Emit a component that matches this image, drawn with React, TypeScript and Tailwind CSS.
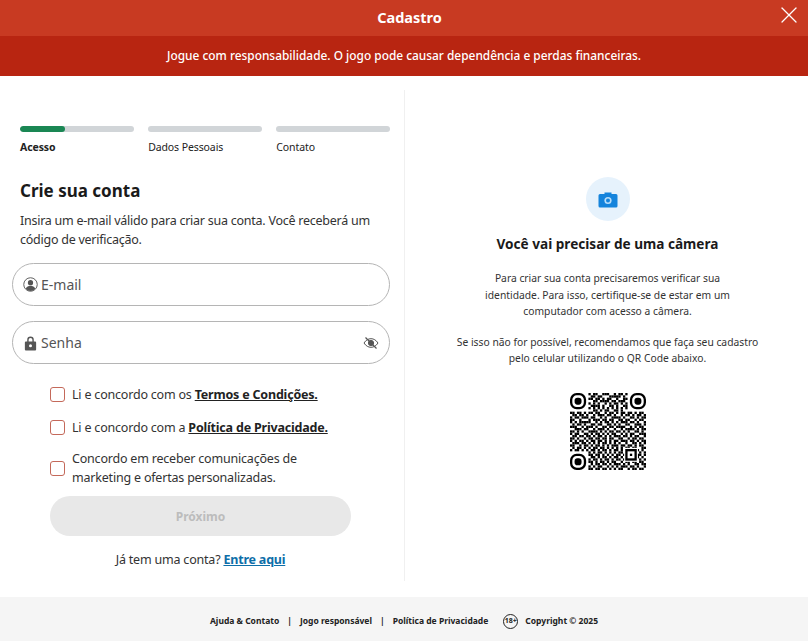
import React from "react";
import { X } from "lucide-react";

const qrRows = [
  "000000001011001110010110100000000",
  "000000000110110001111101000000000",
  "000000001101101011001001100000000",
  "000000000011011110110111000000000",
  "000000001010100101011010100000000",
  "000000000111101001101001100000000",
  "000000001010101010101010100000000",
  "000000000011010110011010000000000",
  "110110101101100101101011011010110",
  "011011010010111011010010110101101",
  "101101110110010100111101001101011",
  "110010001011101101100110110010110",
  "101011111001010110101011101101001",
  "010110100110110011010100110011101",
  "111001011101001101101111001010110",
  "001110110010111010010010111101011",
  "110101001111010101101101010011010",
  "101100110101101010110010101100111",
  "011011011010110101011101101011001",
  "110100101101101101100110010110110",
  "101011010110110101011011101101011",
  "011101101010101101010100100110101",
  "110010110101101010111011011010110",
  "010110101011011010101010110110011",
  "101101010110101101011010101011010",
  "000000001010110101010110100110101",
  "000000001101101010101101010101101",
  "000000000110101101011010101011010",
  "000000001011010110101101011100101",
  "000000001101011010110010110110110",
  "000000000101101101011101010011011",
  "000000001010110010101011101101001",
  "000000001101101101010110010110110",
];

const Finder = ({ x, y }: { x: number; y: number }) => (
  <g>
    <rect x={x + 0.5} y={y + 0.5} width="6" height="6" rx="2.4" fill="none" stroke="#000" strokeWidth="1" />
    <rect x={x + 2} y={y + 2} width="3" height="3" rx="1.2" fill="#000" />
  </g>
);

const QrCode = () => (
  <svg width="76" height="77" viewBox="0 0 33 33" preserveAspectRatio="none">
    {qrRows.map((row, y) =>
      row.split("").map((c, x) => (c === "1" ? <rect key={`${x}-${y}`} x={x} y={y} width="1" height="1" fill="#000" /> : null))
    )}
    <Finder x={0} y={0} />
    <Finder x={26} y={0} />
    <Finder x={0} y={26} />
    <rect x="23.500" y="23.500" width="6" height="6" fill="#fff" />
    <rect x="24.500" y="24.500" width="4" height="4" fill="none" stroke="#000" strokeWidth="1" />
    <rect x="26" y="26" width="1" height="1" fill="#000" />
  </svg>
);

const Step = ({ label, active, progress }: { label: string; active?: boolean; progress?: boolean }) => (
  <div>
    <div className="h-[6px] rounded-full bg-[#d1d5d8] overflow-hidden">
      {progress && <div className="h-full w-[40%] rounded-full bg-[#1a8754]" />}
    </div>
    <p className={`mt-[8px] text-[10.5px] tracking-[-0.1px] leading-[14px] text-[#222] ${active ? "font-bold" : ""}`}>{label}</p>
  </div>
);

const Check = ({ children }: { children: React.ReactNode }) => (
  <label className="flex items-center gap-[7px] text-[12.5px] tracking-[-0.2px] leading-[19px] text-[#333]">
    <span className="w-[15px] h-[15px] shrink-0 rounded-[3px] border border-[#c4695a] bg-white" />
    <span>{children}</span>
  </label>
);

const App: React.FC = () => {
  return (
    <div className="w-full h-[641px] flex flex-col bg-white overflow-hidden font-['Noto_Sans',sans-serif]">
      <header className="relative h-9 shrink-0 flex items-center justify-center pl-[11px] bg-[#c83a22]">
        <h1 className="text-[14.5px] font-bold text-white">Cadastro</h1>
        <X className="absolute right-[5px] top-[1px] text-white" size={28} strokeWidth={1.1} />
      </header>
      <div className="h-10 shrink-0 flex items-center justify-center bg-[#b82511] text-[11.9px] font-medium text-white">
        Jogue com responsabilidade. O jogo pode causar dependência e perdas financeiras.
      </div>

      <main className="flex-1 flex pt-[14px] pb-[16px]">
        <section className="w-[405px] shrink-0 border-r border-[#f0f0f0] pl-3 pr-[14px] pt-9">
          <div className="pl-2 grid grid-cols-3 gap-[14.5px]">
            <Step label="Acesso" active progress />
            <Step label="Dados Pessoais" />
            <Step label="Contato" />
          </div>

          <div className="pl-2 mt-[25px]">
            <h2 className="text-[17px] leading-[24px] font-bold text-[#1a1a1a]">Crie sua conta</h2>
            <p className="mt-[8px] text-[12.5px] tracking-[-0.25px] leading-[19px] text-[#333]">
              Insira um e-mail válido para criar sua conta. Você receberá um código de verificação.
            </p>
          </div>

          <div className="mt-[14px] h-[43px] rounded-full border border-[#b5b5b5] flex items-center pl-[10px] gap-[3px] text-[14px] text-[#555]">
            <svg width="15" height="15" viewBox="0 0 16 16" fill="none">
              <circle cx="8" cy="8" r="7.2" stroke="#555" strokeWidth="1" />
              <circle cx="8" cy="6" r="2.8" fill="#555" />
              <path d="M3 12.6c.8-2.3 2.8-3.2 5-3.2s4.2.9 5 3.2A7 7 0 0 1 8 15a7 7 0 0 1-5-2.4z" fill="#555" />
            </svg>
            E-mail
          </div>
          <div className="mt-[15px] h-[43px] rounded-full border border-[#b5b5b5] flex items-center pl-[10px] pr-[10px] gap-[3px] text-[14px] text-[#555]">
            <svg width="15" height="16" viewBox="0 0 16 16">
              <path d="M3 6.5h1.5V4.6a3.5 3.5 0 0 1 7 0v1.9H13a1 1 0 0 1 1 1V15a1 1 0 0 1-1 1H3a1 1 0 0 1-1-1V7.5a1 1 0 0 1 1-1zM6 6.5h4V4.6a2 2 0 0 0-4 0z" fill="#555" fillRule="evenodd" />
              <circle cx="8" cy="11" r="1.6" fill="#fff" />
            </svg>
            <span className="flex-1">Senha</span>
            <svg width="16" height="14" viewBox="0 0 16 14" fill="none" stroke="#555" strokeWidth="1">
              <path d="M1 7c2-3 4.300-4.300 7-4.300S13 4 15 7c-2 3-4.300 4.300-7 4.300S3 10 1 7z" />
              <circle cx="8" cy="7" r="2.600" fill="#555" />
              <path d="M2.500 1.500l11 11" strokeWidth="1.300" />
            </svg>
          </div>

          <div className="mt-[21px] pl-[38px] flex flex-col gap-[14px]">
            <Check>Li e concordo com os <a className="font-bold underline text-[#222]">Termos e Condições.</a></Check>
            <Check>Li e concordo com a <a className="font-bold underline text-[#222]">Política de Privacidade.</a></Check>
            <div className="-mt-[2px]">
              <Check>Concordo em receber comunicações de<br />marketing e ofertas personalizadas.</Check>
            </div>
          </div>

          <div className="mt-[9px] ml-[38px] w-[301px] h-10 rounded-full bg-[#e8e8e8] flex items-center justify-center pt-[2px] text-[12px] font-bold text-[#bcbcbc]">
            Próximo
          </div>
          <p className="mt-[15px] ml-[38px] w-[301px] text-center text-[12.5px] tracking-[-0.2px] leading-[18px] text-[#333]">
            Já tem uma conta? <a className="font-bold underline text-[#0d6ea8]">Entre aqui</a>
          </p>
        </section>

        <section className="flex-1 flex flex-col items-center pl-[2px] pt-[87px]">
          <div className="w-11 h-11 rounded-full bg-[#e6f2fc] flex items-center justify-center">
            <svg width="20" height="17" viewBox="0 0 20 17">
              <path d="M6.500 1.500h7V3h4.500a1.500 1.500 0 0 1 1.500 1.500v10.500A1.500 1.500 0 0 1 18 16.500H2A1.500 1.500 0 0 1 .5 15V4.500A1.500 1.500 0 0 1 2 3h4.500z" fill="#1584dc" />
              <circle cx="10" cy="9.500" r="3.600" fill="#b9defa" />
              <circle cx="10" cy="9.500" r="2" fill="#1584dc" />
            </svg>
          </div>
          <h3 className="mt-[13px] text-[13.6px] leading-[20px] font-bold text-[#1a1a1a]">Você vai precisar de uma câmera</h3>
          <div className="mt-[16px] w-[320px] text-center text-[10.3px] leading-[16.500px] text-[#333]">
            <p>Para criar sua conta precisaremos verificar sua<br />identidade. Para isso, certifique-se de estar em um<br />computador com acesso a câmera.</p>
            <p className="mt-[14px]">Se isso não for possível, recomendamos que faça seu cadastro<br />pelo celular utilizando o QR Code abaixo.</p>
          </div>
          <div className="mt-[26px]">
            <QrCode />
          </div>
        </section>
      </main>

      <footer className="h-11 shrink-0 bg-[#f5f5f5] flex items-center justify-center pt-[5px] text-[8.5px] font-bold text-[#222]">
        <span>Ajuda &amp; Contato</span>
        <span className="mx-[8px]">|</span>
        <span>Jogo responsável</span>
        <span className="mx-[8px]">|</span>
        <span>Política de Privacidade</span>
        <span className="ml-[15px] mr-[7px] w-[15px] h-[15px] rounded-full border border-[#222] flex items-center justify-center text-[7px]">18+</span>
        <span>Copyright © 2025</span>
      </footer>
    </div>
  );
};

export default App;
